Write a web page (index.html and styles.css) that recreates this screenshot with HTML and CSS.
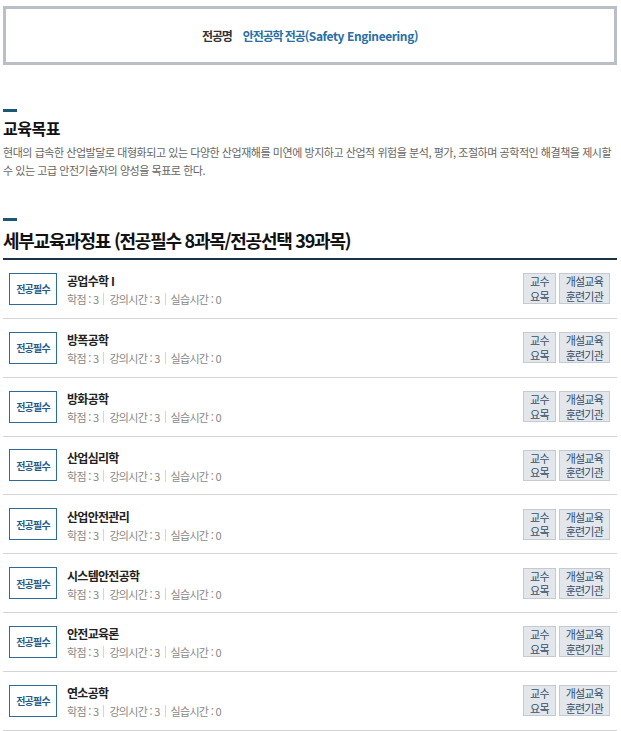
FILE: index.html
```html
<!DOCTYPE html>
<html lang="ko">
<head>
    <meta charset="UTF-8">
    <meta name="viewport" content="width=device-width, initial-scale=1.0">
    <title>안전공학 전공</title>
    <link rel="stylesheet" href="styles.css">
</head>
<body>
    <div class="wrap">
        <div class="major-box">
            <span class="major-label">전공명</span>
            <span class="major-name">안전공학 전공<span class="en">(Safety Engineering)</span></span>
        </div>

        <div class="section goal">
            <h2 class="sec-title">교육목표</h2>
            <p class="goal-text">현대의 급속한 산업발달로 대형화되고 있는 다양한 산업재해를 미연에 방지하고 산업적 위험을 분석, 평가, 조절하며 공학적인 해결책을 제시할 수 있는 고급 안전기술자의 양성을 목표로 한다.</p>
        </div>

        <div class="section curriculum">
            <h2 class="sec-title big">세부교육과정표 (전공필수 8과목/전공선택 39과목)</h2>
            <ul class="course-list">
                <li class="course">
                    <span class="badge">전공필수</span>
                    <div class="course-info">
                        <div class="course-name">공업수학 I</div>
                        <div class="course-meta">학점 : 3<span class="bar"></span>강의시간 : 3<span class="bar"></span>실습시간 : 0</div>
                    </div>
                    <div class="course-btns">
                        <a href="#" class="btn">교수<br>요목</a>
                        <a href="#" class="btn">개설교육<br>훈련기관</a>
                    </div>
                </li>
                <li class="course">
                    <span class="badge">전공필수</span>
                    <div class="course-info">
                        <div class="course-name">방폭공학</div>
                        <div class="course-meta">학점 : 3<span class="bar"></span>강의시간 : 3<span class="bar"></span>실습시간 : 0</div>
                    </div>
                    <div class="course-btns">
                        <a href="#" class="btn">교수<br>요목</a>
                        <a href="#" class="btn">개설교육<br>훈련기관</a>
                    </div>
                </li>
                <li class="course">
                    <span class="badge">전공필수</span>
                    <div class="course-info">
                        <div class="course-name">방화공학</div>
                        <div class="course-meta">학점 : 3<span class="bar"></span>강의시간 : 3<span class="bar"></span>실습시간 : 0</div>
                    </div>
                    <div class="course-btns">
                        <a href="#" class="btn">교수<br>요목</a>
                        <a href="#" class="btn">개설교육<br>훈련기관</a>
                    </div>
                </li>
                <li class="course">
                    <span class="badge">전공필수</span>
                    <div class="course-info">
                        <div class="course-name">산업심리학</div>
                        <div class="course-meta">학점 : 3<span class="bar"></span>강의시간 : 3<span class="bar"></span>실습시간 : 0</div>
                    </div>
                    <div class="course-btns">
                        <a href="#" class="btn">교수<br>요목</a>
                        <a href="#" class="btn">개설교육<br>훈련기관</a>
                    </div>
                </li>
                <li class="course">
                    <span class="badge">전공필수</span>
                    <div class="course-info">
                        <div class="course-name">산업안전관리</div>
                        <div class="course-meta">학점 : 3<span class="bar"></span>강의시간 : 3<span class="bar"></span>실습시간 : 0</div>
                    </div>
                    <div class="course-btns">
                        <a href="#" class="btn">교수<br>요목</a>
                        <a href="#" class="btn">개설교육<br>훈련기관</a>
                    </div>
                </li>
                <li class="course">
                    <span class="badge">전공필수</span>
                    <div class="course-info">
                        <div class="course-name">시스템안전공학</div>
                        <div class="course-meta">학점 : 3<span class="bar"></span>강의시간 : 3<span class="bar"></span>실습시간 : 0</div>
                    </div>
                    <div class="course-btns">
                        <a href="#" class="btn">교수<br>요목</a>
                        <a href="#" class="btn">개설교육<br>훈련기관</a>
                    </div>
                </li>
                <li class="course">
                    <span class="badge">전공필수</span>
                    <div class="course-info">
                        <div class="course-name">안전교육론</div>
                        <div class="course-meta">학점 : 3<span class="bar"></span>강의시간 : 3<span class="bar"></span>실습시간 : 0</div>
                    </div>
                    <div class="course-btns">
                        <a href="#" class="btn">교수<br>요목</a>
                        <a href="#" class="btn">개설교육<br>훈련기관</a>
                    </div>
                </li>
                <li class="course">
                    <span class="badge">전공필수</span>
                    <div class="course-info">
                        <div class="course-name">연소공학</div>
                        <div class="course-meta">학점 : 3<span class="bar"></span>강의시간 : 3<span class="bar"></span>실습시간 : 0</div>
                    </div>
                    <div class="course-btns">
                        <a href="#" class="btn">교수<br>요목</a>
                        <a href="#" class="btn">개설교육<br>훈련기관</a>
                    </div>
                </li>
            </ul>
        </div>
    </div>
</body>
</html>
```

FILE: styles.css
```css
:root {
    --point-color: #1b5876;
    --navy: #1c3247;
    --blue: #2a6ea6;
    --badge-color: #1f5d8c;
    --line-color: #d4d4d4;
}

* {
    box-sizing: border-box;
    margin: 0;
    padding: 0;
}

body {
    font-family: "Noto Sans CJK KR", "Noto Sans", sans-serif;
    color: #222;
    background-color: #fff;
}

.wrap {
    padding: 6px 4px 0 3px;
}

/* 전공명 박스 */
.major-box {
    display: flex;
    justify-content: center;
    align-items: center;
    gap: 11px;
    height: 59px;
    border: 3px solid #b9bec7;
    font-size: 12px;
    font-weight: bold;
    letter-spacing: -1.1px;
}

.major-label {
    color: #333;
}

.major-name {
    color: var(--blue);
}

.major-name .en {
    letter-spacing: -0.4px;
}

/* 섹션 */
.section.goal {
    margin-top: 44px;
}

.section.curriculum {
    margin-top: 39px;
}

.sec-title {
    font-size: 16px;
    line-height: 20px;
    font-weight: bold;
    color: #111;
    letter-spacing: -0.5px;
}

.sec-title::before {
    content: "";
    display: block;
    width: 14px;
    height: 3px;
    margin-bottom: 6px;
    background-color: var(--point-color);
}

.sec-title.big {
    font-size: 18px;
    line-height: 22px;
    letter-spacing: -1.25px;
    margin-bottom: 7px;
}

.sec-title.big::before {
    margin-bottom: 8px;
}

.goal-text {
    margin-top: 5px;
    font-size: 11px;
    line-height: 18px;
    color: #666;
    letter-spacing: -0.45px;
}

/* 교육과정 목록 */
.course-list {
    list-style: none;
    border-top: 2px solid var(--navy);
}

.course {
    display: flex;
    align-items: center;
    height: 58.85px;
    padding: 0 7px 0 6px;
    border-bottom: 1px solid var(--line-color);
}

.badge {
    flex: none;
    display: flex;
    align-items: center;
    justify-content: center;
    width: 48px;
    height: 32px;
    border: 1px solid #2b6d99;
    color: var(--badge-color);
    font-size: 10px;
    font-weight: bold;
    letter-spacing: -0.8px;
}

.course-info {
    flex: 1;
    margin-left: 10px;
    margin-top: 3px;
}

.course-name {
    font-size: 12px;
    line-height: 18px;
    font-weight: bold;
    color: #222;
    letter-spacing: -0.7px;
}

.course-meta {
    display: flex;
    align-items: center;
    font-size: 11px;
    line-height: 18px;
    color: #888;
    letter-spacing: -0.7px;
}

.course-meta .bar {
    display: inline-block;
    width: 1px;
    height: 12px;
    margin: 0 5px;
    background-color: #d6d6d6;
}

.course-btns {
    display: flex;
    gap: 3px;
}

.btn {
    display: block;
    padding: 0 6px;
    font-size: 11px;
    line-height: 14.5px;
    text-align: center;
    color: #344f6a;
    text-decoration: none;
    letter-spacing: -0.8px;
    background-color: #e3e6eb;
    border: 1px solid #c5c9d0;
}
```
